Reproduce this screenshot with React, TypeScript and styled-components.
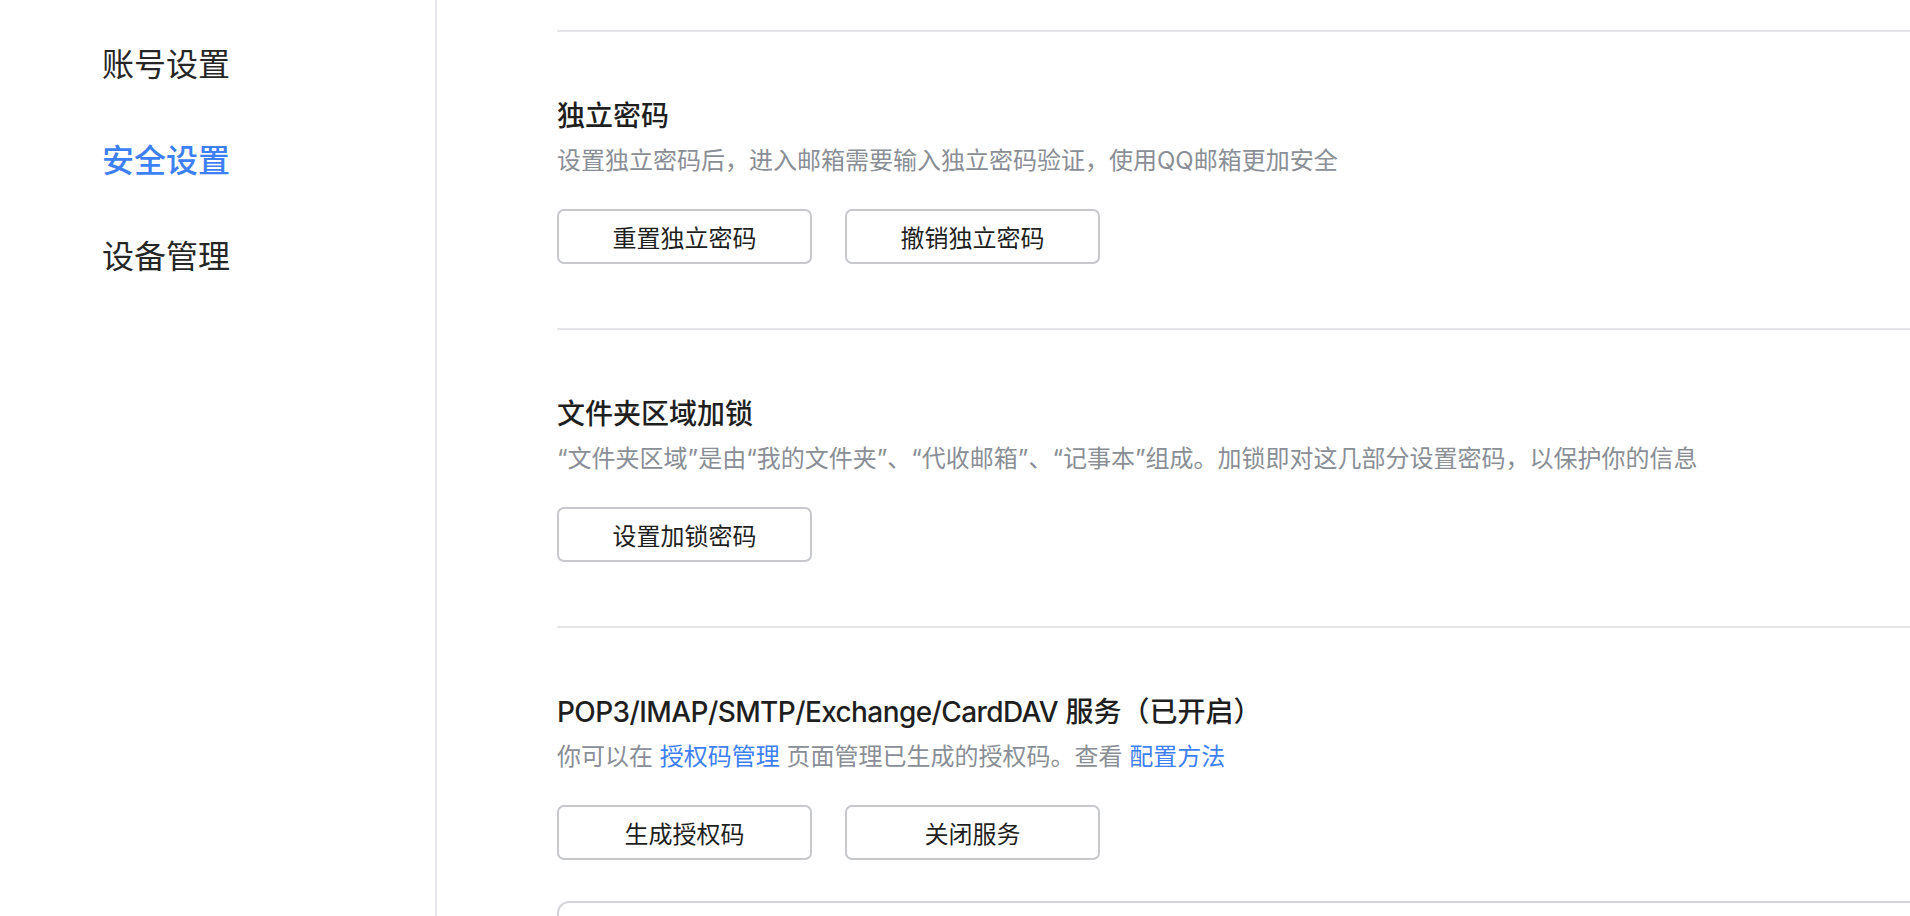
import styled, { createGlobalStyle } from 'styled-components';

const GlobalStyle = createGlobalStyle`
    html, body {
        margin: 0;
        padding: 0;
        background: #ffffff;
        overflow: hidden;
    }
    body {
        font-family: Inter, 'Noto Sans CJK SC', sans-serif;
        color: #1f1f1f;
    }
`;

const Page = styled.div`
    display: flex;
    height: 916px;
    width: 100%;
`;

const Sidebar = styled.nav`
    width: 435px;
    flex-shrink: 0;
    border-right: 2px solid #e6e6ea;
    padding-top: 17px;
    box-sizing: content-box;
`;

const NavItem = styled.div<{ $active?: boolean }>`
    height: 96px;
    line-height: 96px;
    padding-left: 102px;
    font-size: 32px;
    font-weight: ${(p) => (p.$active ? 500 : 400)};
    color: ${(p) => (p.$active ? '#3d7ff5' : '#262626')};
`;

const Content = styled.main`
    flex: 1;
    padding: 30px 0 0 120px;
    min-width: 0;
`;

const Section = styled.section`
    border-top: 2px solid #e6e6ea;
    padding: 64px 0 64px;
`;

const Title = styled.h2`
    margin: 0;
    font-size: 28px;
    line-height: 40px;
    font-weight: 500;
    color: #1f1f1f;
`;

// protocol names in the title run a touch tighter than Inter's default
const Latin = styled.span`
    letter-spacing: -0.6px;
`;

const Desc = styled.p`
    margin: 7px 0 0;
    font-size: 24px;
    line-height: 36px;
    color: #8a8e96;
`;

const Link = styled.a`
    color: #3d7ff5;
    text-decoration: none;
`;

const Buttons = styled.div`
    display: flex;
    gap: 33px;
    margin-top: 30px;
`;

const Button = styled.button`
    width: 255px;
    height: 55px;
    border: 2px solid #c6c8cc;
    border-radius: 7px;
    background: #ffffff;
    font-family: inherit;
    font-size: 24px;
    color: #1f1f1f;
    cursor: pointer;
`;

const Panel = styled.div`
    margin-top: 41px;
    margin-right: -20px;
    height: 200px;
    border: 2px solid #d3d5d8;
    border-radius: 12px;
`;

function App() {
    return (
        <>
            <GlobalStyle />
            <Page>
                <Sidebar>
                    <NavItem>账号设置</NavItem>
                    <NavItem $active>安全设置</NavItem>
                    <NavItem>设备管理</NavItem>
                </Sidebar>
                <Content>
                    <Section>
                        <Title>独立密码</Title>
                        <Desc>设置独立密码后，进入邮箱需要输入独立密码验证，使用QQ邮箱更加安全</Desc>
                        <Buttons>
                            <Button>重置独立密码</Button>
                            <Button>撤销独立密码</Button>
                        </Buttons>
                    </Section>
                    <Section>
                        <Title>文件夹区域加锁</Title>
                        <Desc>“文件夹区域”是由“我的文件夹”、“代收邮箱”、“记事本”组成。加锁即对这几部分设置密码，以保护你的信息</Desc>
                        <Buttons>
                            <Button>设置加锁密码</Button>
                        </Buttons>
                    </Section>
                    <Section>
                        <Title>
                            <Latin>POP3/IMAP/SMTP/Exchange/CardDAV</Latin> 服务（已开启）
                        </Title>
                        <Desc>
                            你可以在 <Link>授权码管理</Link> 页面管理已生成的授权码。查看 <Link>配置方法</Link>
                        </Desc>
                        <Buttons>
                            <Button>生成授权码</Button>
                            <Button>关闭服务</Button>
                        </Buttons>
                        <Panel />
                    </Section>
                </Content>
            </Page>
        </>
    );
}

export default App;
